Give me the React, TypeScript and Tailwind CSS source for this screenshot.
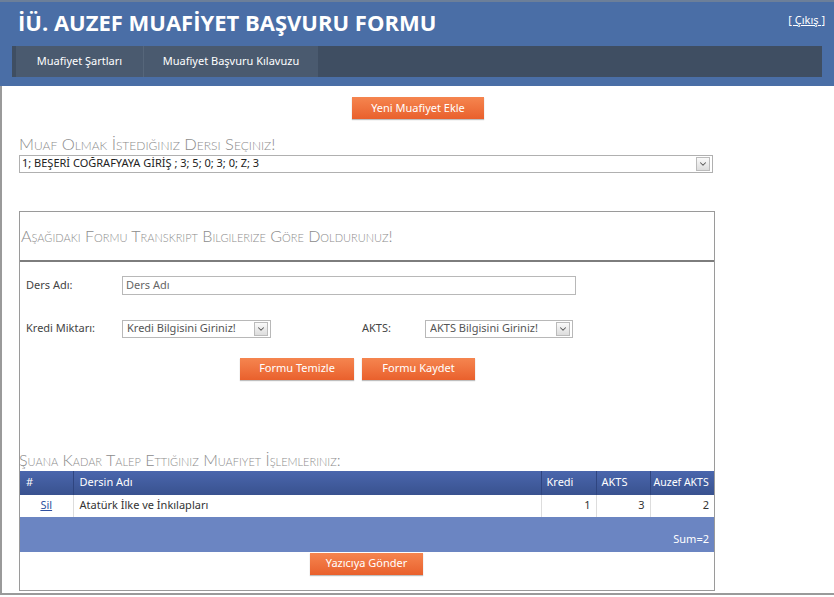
import { ChevronDown } from 'lucide-react';

const font = { fontFamily: '"Noto Sans", "DejaVu Sans", sans-serif' };

function OrangeButton({ label, className = '' }: { label: string; className?: string }) {
  return (
    <button
      className={`h-[22px] bg-gradient-to-b from-[#f5854f] to-[#e9602c] text-[11px] text-white shadow-[0_1px_1px_rgba(0,0,0,0.25)] ${className}`}
    >
      {label}
    </button>
  );
}

function SelectBox({ text, className = '' }: { text: string; className?: string }) {
  return (
    <div
      className={`flex h-[18px] items-center justify-between border border-[#b8b8b8] bg-white pl-1 pr-[2px] ${className}`}
    >
      <span className="truncate text-[11px] text-[#555]">{text}</span>
      <span className="flex h-[14px] w-[14px] items-center justify-center border border-[#bbb] bg-gradient-to-b from-[#fafafa] to-[#ddd]">
        <ChevronDown size={10} strokeWidth={2.5} className="text-[#555]" />
      </span>
    </div>
  );
}

function SmallCapsTitle({ children, className = '' }: { children: string; className?: string }) {
  return (
    <h2
      className={`font-light leading-none text-[#8c8c8c] [font-variant:small-caps] ${className}`}
      style={{ fontFamily: 'Lato, "Open Sans", sans-serif' }}
    >
      {children}
    </h2>
  );
}

export default function App() {
  return (
    <div className="h-[597px] w-[834px] overflow-hidden bg-white" style={font}>
      <header className="border-t-2 border-[#6c7f99] bg-[#4a6ea6] pb-[9px]">
        <div className="flex h-[44px] items-start justify-between pl-[18px] pr-[9px]">
          <h1
            className="mt-[9px] text-[22px] font-bold leading-none text-white"
            style={{ fontFamily: '"Open Sans", "Noto Sans", sans-serif' }}
          >
            İÜ. AUZEF MUAFİYET BAŞVURU FORMU
          </h1>
          <a className="mt-[10px] text-[11px] text-white underline">[ Çıkış ]</a>
        </div>
        <nav className="mx-[12px] flex h-[31px] bg-[#3f4e62] pl-[4px]">
          <div className="flex bg-[#4a5a6f]">
            <span className="flex w-[127px] items-center justify-center text-[11px] text-white">
              Muafiyet Şartları
            </span>
            <span className="flex w-[175px] items-center justify-center border-l border-[#56667a] text-[11px] text-white">
              Muafiyet Başvuru Kılavuzu
            </span>
          </div>
        </nav>
      </header>

      <main className="h-[509px] border-b-2 border-l-2 border-[#9a9a9a] pl-[17px]">
        <div className="flex pl-[333px] pt-[11px]">
          <OrangeButton label="Yeni Muafiyet Ekle" className="w-[132px]" />
        </div>

        <SmallCapsTitle className="mt-[17px] text-[16.5px]">Muaf Olmak İstediğiniz Dersi Seçiniz!</SmallCapsTitle>
        <div className="mt-[2px] flex h-[18px] w-[694px] items-center justify-between border border-[#b0b0b0] pl-[2px] pr-[2px]">
          <span className="text-[11px] text-[#222]">1; BEŞERİ COĞRAFYAYA GİRİŞ ; 3; 5; 0; 3; 0; Z; 3</span>
          <span className="flex h-[14px] w-[14px] items-center justify-center border border-[#bbb] bg-gradient-to-b from-[#fafafa] to-[#ddd]">
            <ChevronDown size={10} strokeWidth={2.5} className="text-[#555]" />
          </span>
        </div>

        <section className="mt-[38px] flex h-[380px] w-[696px] flex-col border border-[#9a9a9a]">
          <div className="flex h-[50px] items-center border-b-2 border-[#7d7d7d] pl-[1px] pt-[2px]">
            <SmallCapsTitle className="text-[16.1px]">
              Aşağıdaki Formu Transkript Bilgilerize Göre Doldurunuz!
            </SmallCapsTitle>
          </div>

          <div className="flex flex-1 flex-col">
            <div className="mt-[14px] flex items-center">
              <label className="w-[102px] pl-[6px] text-[11px] text-[#444]">Ders Adı:</label>
              <div className="flex h-[19px] w-[454px] items-center border border-[#b8b8b8] pl-[3px] text-[11px] text-[#666]">
                Ders Adı
              </div>
            </div>

            <div className="mt-[25px] flex items-center">
              <label className="w-[102px] pl-[6px] text-[11px] text-[#444]">Kredi Miktarı:</label>
              <SelectBox text="Kredi Bilgisini Giriniz!" className="w-[149px]" />
              <label className="ml-[91px] w-[63px] text-[11px] text-[#444]">AKTS:</label>
              <SelectBox text="AKTS Bilgisini Giriniz!" className="w-[148px]" />
            </div>

            <div className="mt-[20px] flex gap-[8px] pl-[220px]">
              <OrangeButton label="Formu Temizle" className="w-[114px]" />
              <OrangeButton label="Formu Kaydet" className="w-[113px]" />
            </div>

            <SmallCapsTitle className="mt-[72px] -ml-[1px] text-[16.1px]">
              Şuana Kadar Talep Ettiğiniz Muafiyet İşlemleriniz:
            </SmallCapsTitle>

            <table className="mt-[3px] w-[694px] table-fixed border-collapse text-[11px]">
              <thead>
                <tr className="h-[24px] bg-gradient-to-b from-[#4a66ad] to-[#39528f] text-left text-white">
                  <th className="w-[53px] border-r border-[#2f4580] pl-[6px] font-normal">#</th>
                  <th className="border-r border-[#2f4580] pl-[6px] font-normal">Dersin Adı</th>
                  <th className="w-[55px] border-r border-[#2f4580] pl-[5px] font-normal">Kredi</th>
                  <th className="w-[54px] border-r border-[#2f4580] pl-[5px] font-normal">AKTS</th>
                  <th className="w-[64px] whitespace-nowrap pl-[3px] text-[10.5px] font-normal">Auzef AKTS</th>
                </tr>
              </thead>
              <tbody>
                <tr className="h-[22px] text-[#333]">
                  <td className="border-r border-[#ddd] text-center">
                    <a className="text-[#3050a0] underline">Sil</a>
                  </td>
                  <td className="border-r border-[#ddd] pl-[6px]">Atatürk İlke ve İnkılapları</td>
                  <td className="border-r border-[#ddd] pr-[5px] text-right">1</td>
                  <td className="border-r border-[#ddd] pr-[5px] text-right">3</td>
                  <td className="pr-[5px] text-right">2</td>
                </tr>
                <tr className="h-[35px] bg-[#6b85c2] text-white">
                  <td colSpan={5} className="pr-[5px] pt-[10px] text-right">
                    Sum=2
                  </td>
                </tr>
              </tbody>
            </table>

            <div className="mt-[1px] flex pl-[290px]">
              <OrangeButton label="Yazıcıya Gönder" className="w-[113px]" />
            </div>
          </div>
        </section>
      </main>
    </div>
  );
}
